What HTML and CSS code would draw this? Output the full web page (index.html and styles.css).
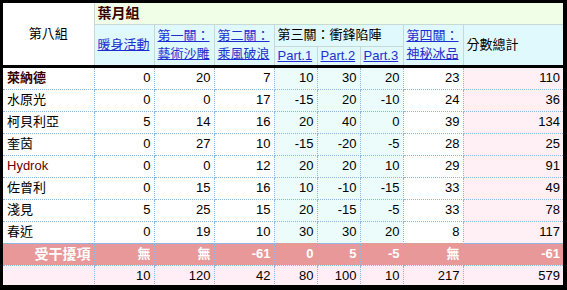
FILE: index.html
```html
<!DOCTYPE html>
<html>
<head>
<meta charset="utf-8">
<link rel="stylesheet" href="styles.css">
</head>
<body>
<div class="frame">
<table class="score">
  <colgroup>
    <col class="w-name"><col class="w-60"><col class="w-60"><col class="w-60">
    <col class="w-43"><col class="w-43"><col class="w-43"><col class="w-60"><col class="w-100">
  </colgroup>
  <thead>
    <tr class="h1">
      <th class="group-name" rowspan="3">第八組</th>
      <th class="team" colspan="8">葉月組</th>
    </tr>
    <tr class="h2">
      <th rowspan="2"><a href="#">暖身活動</a></th>
      <th rowspan="2"><a href="#">第一關：<br>藝術沙雕</a></th>
      <th rowspan="2"><a href="#">第二關：<br>乘風破浪</a></th>
      <th colspan="3">第三關：衝鋒陷陣</th>
      <th rowspan="2"><a href="#">第四關：<br>神秘冰品</a></th>
      <th rowspan="2">分數總計</th>
    </tr>
    <tr class="h3">
      <th><a href="#">Part.1</a></th>
      <th><a href="#">Part.2</a></th>
      <th><a href="#">Part.3</a></th>
    </tr>
  </thead>
  <tbody>
    <tr><td class="name lead">萊納德</td><td>0</td><td>20</td><td>7</td><td class="p">10</td><td class="p">30</td><td class="p">20</td><td>23</td><td class="sum">110</td></tr>
    <tr><td class="name">水原光</td><td>0</td><td>0</td><td>17</td><td class="p">-15</td><td class="p">20</td><td class="p">-10</td><td>24</td><td class="sum">36</td></tr>
    <tr><td class="name">柯貝利亞</td><td>5</td><td>14</td><td>16</td><td class="p">20</td><td class="p">40</td><td class="p">0</td><td>39</td><td class="sum">134</td></tr>
    <tr><td class="name">奎茵</td><td>0</td><td>27</td><td>10</td><td class="p">-15</td><td class="p">-20</td><td class="p">-5</td><td>28</td><td class="sum">25</td></tr>
    <tr><td class="name latin">Hydrok</td><td>0</td><td>0</td><td>12</td><td class="p">20</td><td class="p">20</td><td class="p">10</td><td>29</td><td class="sum">91</td></tr>
    <tr><td class="name">佐曾利</td><td>0</td><td>15</td><td>16</td><td class="p">10</td><td class="p">-10</td><td class="p">-15</td><td>33</td><td class="sum">49</td></tr>
    <tr><td class="name">淺見</td><td>5</td><td>25</td><td>15</td><td class="p">20</td><td class="p">-15</td><td class="p">-5</td><td>33</td><td class="sum">78</td></tr>
    <tr><td class="name">春近</td><td>0</td><td>19</td><td>10</td><td class="p">30</td><td class="p">30</td><td class="p">20</td><td>8</td><td class="sum">117</td></tr>
    <tr class="interfere"><td class="label">受干擾項</td><td>無</td><td>無</td><td>-61</td><td>0</td><td>5</td><td>-5</td><td>無</td><td>-61</td></tr>
    <tr class="totals"><td></td><td>10</td><td>120</td><td>42</td><td>80</td><td>100</td><td>10</td><td>217</td><td>579</td></tr>
  </tbody>
</table>
</div>
</body>
</html>
```

FILE: styles.css
```css
html, body {
  margin: 0;
  padding: 0;
  background: #000;
}
.frame {
  padding: 3px 0 0 3px;
  height: 282px;
  width: 560px;
  overflow: hidden;
}
.score {
  border-collapse: collapse;
  table-layout: fixed;
  width: 560px;
  font-family: "Liberation Sans", "Noto Sans CJK TC", sans-serif;
  font-size: 13px;
  color: #000;
}
.w-name { width: 91px; }
.w-60 { width: 60px; }
.w-43 { width: 43px; }
.w-100 { width: 100px; }

.score th {
  font-weight: normal;
  text-align: left;
  padding: 0 3px;
  line-height: 18px;
  background: #e0f9fd;
  border: 1px solid #c6d9d6;
  vertical-align: middle;
}
.score th a {
  color: #1f2fcf;
  text-decoration: underline;
}
.score .h1 .group-name {
  background: #fff;
  text-align: center;
  border-left: none;
  border-top: none;
}
.score .h1 { height: 21px; }
.score .h2 { height: 22px; }
.score .h3 { height: 19px; }
.score .h1 .team {
  background: #f0fee8;
  font-weight: bold;
  font-size: 14px;
  color: #3a0000;
  border-top: none;
  border-right: none;
}
.score .h2 th:last-child { border-right: none; }
.score thead tr:last-child th,
.score .h2 th[rowspan],
.score .group-name {
  border-bottom: 3px solid #000;
}

.score td {
  height: 21px;
  padding: 0 3px 0 3px;
  text-align: right;
  border: 1px dotted #8ab8e0;
  background: #fff;
  line-height: 16px;
}
.score td:last-child { border-right: none; }
.score td:first-child { border-left: none; }
.score td.name {
  text-align: left;
  padding-left: 4px;
  font-size: 13px;
}
.score td.latin {
  color: #6a0000;
}
.score td.lead {
  font-weight: bold;
  color: #3a0000;
}
.score td.p { background: #ebfcfb; }
.score td.sum { background: #fff0f5; }

.score .interfere td {
  background: #e89898;
  color: #fff;
  font-weight: bold;
}
.score .interfere td.label {
  text-align: right;
  font-size: 14px;
}
.score .totals td {
  background: #ffeef5;
}
```
